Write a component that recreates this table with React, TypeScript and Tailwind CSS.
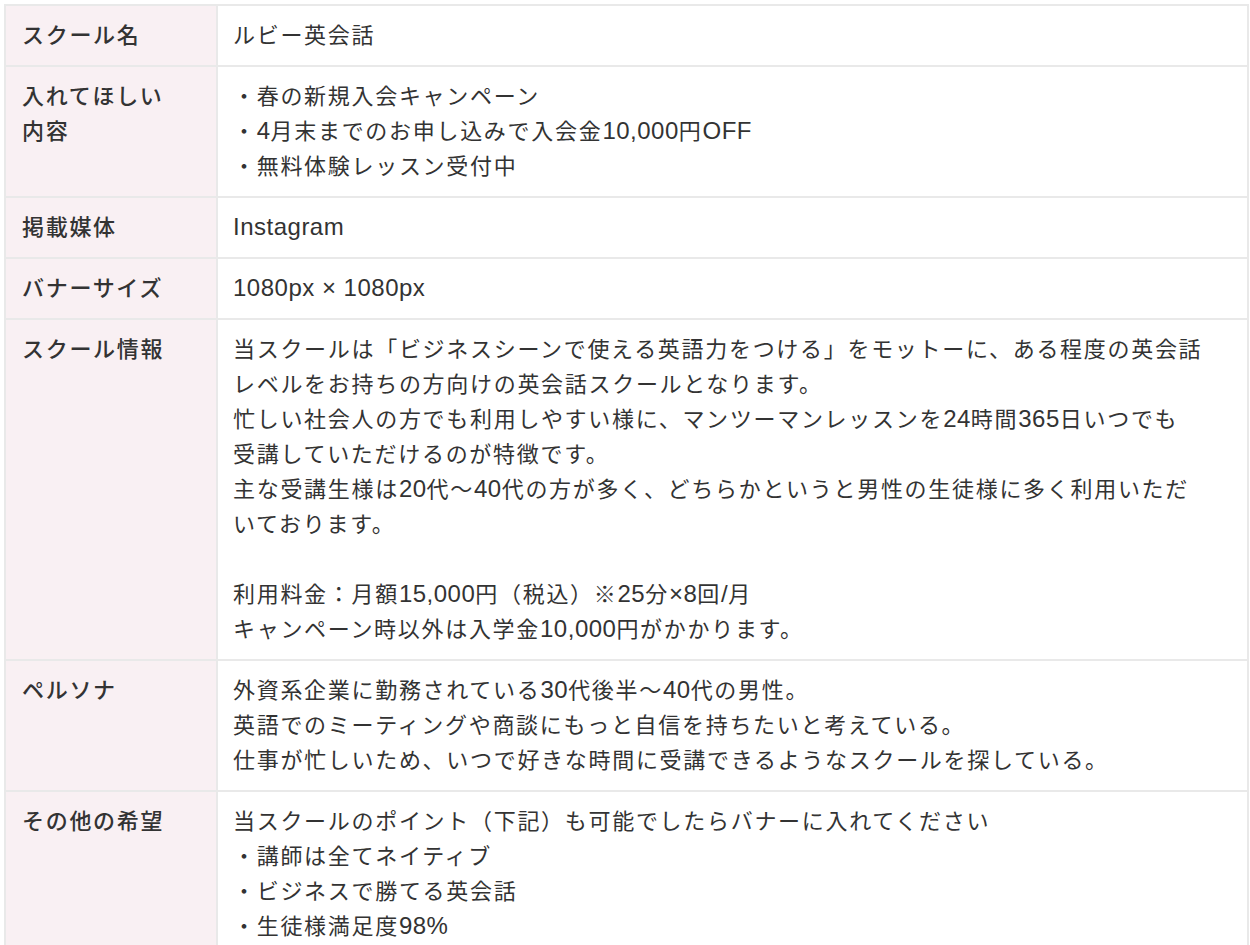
const rows: { label: string[]; lines: string[] }[] = [
  { label: ["スクール名"], lines: ["ルビー英会話"] },
  {
    label: ["入れてほしい", "内容"],
    lines: ["・春の新規入会キャンペーン", "・4月末までのお申し込みで入会金10,000円OFF", "・無料体験レッスン受付中"],
  },
  { label: ["掲載媒体"], lines: ["Instagram"] },
  { label: ["バナーサイズ"], lines: ["1080px × 1080px"] },
  {
    label: ["スクール情報"],
    lines: [
      "当スクールは「ビジネスシーンで使える英語力をつける」をモットーに、ある程度の英会話",
      "レベルをお持ちの方向けの英会話スクールとなります。",
      "忙しい社会人の方でも利用しやすい様に、マンツーマンレッスンを24時間365日いつでも",
      "受講していただけるのが特徴です。",
      "主な受講生様は20代〜40代の方が多く、どちらかというと男性の生徒様に多く利用いただ",
      "いております。",
      "",
      "利用料金：月額15,000円（税込）※25分×8回/月",
      "キャンペーン時以外は入学金10,000円がかかります。",
    ],
  },
  {
    label: ["ペルソナ"],
    lines: [
      "外資系企業に勤務されている30代後半〜40代の男性。",
      "英語でのミーティングや商談にもっと自信を持ちたいと考えている。",
      "仕事が忙しいため、いつで好きな時間に受講できるようなスクールを探している。",
    ],
  },
  {
    label: ["その他の希望"],
    lines: [
      "当スクールのポイント（下記）も可能でしたらバナーに入れてください",
      "・講師は全てネイティブ",
      "・ビジネスで勝てる英会話",
      "・生徒様満足度98%",
    ],
  },
];

// latin runs are set a bit larger and tighter than the japanese text
function Line({ text }: { text: string }) {
  if (text === "") return <div className="h-[35px]" />;
  const parts = text.split(/([\x20-\x7E×]+)/).filter((p) => p !== "");
  return (
    <div className="h-[35px] whitespace-nowrap">
      {parts.map((p, i) =>
        /^[\x20-\x7E×]+$/.test(p) ? (
          <span key={i} className="text-[24px] leading-[20px] tracking-[0.5px]">
            {p}
          </span>
        ) : (
          <span key={i}>{p}</span>
        )
      )}
    </div>
  );
}

export default function App() {
  return (
    <div className="min-h-screen bg-white pl-[4px] pr-[1px] pt-[4px] font-['Liberation_Sans','Noto_Sans_CJK_JP',sans-serif] text-[22px] leading-[35px] tracking-[1.7px] text-[#333333]">
      <table className="w-full border-collapse">
        <tbody>
          {rows.map((row, i) => (
            <tr key={i}>
              <th className="w-[212px] border-2 border-[#e9e9e9] bg-[#f9f0f3] px-[16px] py-[12px] text-left align-top font-medium">
                {row.label.map((l, j) => (
                  <div key={j}>{l}</div>
                ))}
              </th>
              <td className="border-2 border-[#e9e9e9] px-[15px] py-[12px] align-top">
                {row.lines.map((l, j) => (
                  <Line key={j} text={l} />
                ))}
              </td>
            </tr>
          ))}
        </tbody>
      </table>
    </div>
  );
}
